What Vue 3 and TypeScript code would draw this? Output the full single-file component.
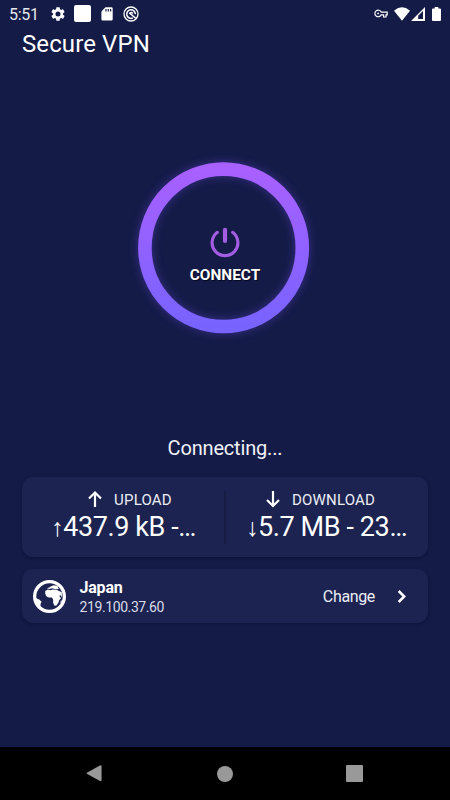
<script setup lang="ts">
import { ref } from 'vue'

interface Traffic {
  label: string
  arrow: string
  value: string
  icon: string
}

const title = 'Secure VPN'
const status = ref('Connecting...')
const server = { name: 'Japan', ip: '219.100.37.60' }
const traffic: Traffic[] = [
  { label: 'UPLOAD', arrow: '↑', value: '437.9 kB -…', icon: 'M7 16V2M1 7.500L7 1.500l6 6' },
  { label: 'DOWNLOAD', arrow: '↓', value: '5.7 MB - 23…', icon: 'M7 0v15M1 9L7 15l6-6' },
]
</script>

<template>
  <div class="screen">
    <header class="statusbar">
      <span class="clock">5:51</span>
      <svg class="gear" viewBox="2 2 20 20"><path fill="#fff" fill-rule="evenodd" d="M19.140 12.940c.04-.3.06-.61.06-.94 0-.32-.02-.64-.07-.94l2.030-1.580c.18-.14.23-.41.12-.61l-1.920-3.320c-.12-.22-.37-.29-.59-.22l-2.390.96c-.5-.38-1.030-.7-1.620-.94L14.400 2.810c-.04-.24-.24-.41-.48-.41h-3.840c-.24 0-.43.17-.47.41l-.36 2.540c-.59.24-1.130.57-1.620.94l-2.390-.96c-.22-.08-.47 0-.59.22L2.740 8.870c-.12.21-.08.47.12.61l2.030 1.580c-.05.3-.09.63-.09.94s.02.64.07.94l-2.030 1.580c-.18.14-.23.41-.12.61l1.920 3.320c.12.22.37.29.59.22l2.390-.96c.5.38 1.030.7 1.620.94l.36 2.540c.05.24.24.41.48.41h3.840c.24 0 .44-.17.47-.41l.36-2.540c.59-.24 1.130-.56 1.620-.94l2.390.96c.22.08.47 0 .59-.22l1.920-3.320c.12-.22.07-.47-.12-.61zM12 15.600A3.600 3.600 0 1 1 12 8.400a3.600 3.600 0 0 1 0 7.200z"/></svg>
      <i class="tile"></i>
      <svg class="sd" viewBox="0 0 12 14"><path fill="#fff" fill-rule="evenodd" d="M4.500.3H10.500Q11.700.3 11.700 1.500V12.300Q11.700 13.600 10.500 13.600H1.600Q.4 13.600.4 12.300V4.500zM4.400 2v2.600h1.200V2zM6.700 2v2.600h1.200V2zM9 2v2.600h1.200V2z"/></svg>
      <svg class="dnd" viewBox="0 0 16 16" fill="none" stroke="#fff"><circle cx="8" cy="8" r="7" stroke-width="1.300"/><path stroke-width="1.500" d="M9.800 12A4.300 4.300 0 1 1 12.300 8.200M6.500 7l6.300 5.400"/><path stroke-width="1.500" d="M6.300 7.700Q8.200 5.200 9.800 7.500"/></svg>
      <span class="grow"></span>
      <svg class="key" viewBox="0 0 14 9" fill="none" stroke="#fff" stroke-width="1.200"><path d="M7.200 3.100H13.200V5.800H12V8H9.600V5.800H7.200A3.300 3.300 0 1 1 7.200 3.100z"/><circle cx="4.100" cy="4.400" r=".9" fill="#fff" stroke="none"/></svg>
      <svg class="wifi" viewBox="0 0 16 14"><path fill="#fff" d="M0 3.700Q8-3 16 3.700L8 13.700z"/></svg>
      <svg class="cell" viewBox="0 0 14 14"><path fill="#fff" fill-rule="evenodd" d="M14 0V14H0zM12 4L7.200 8.800V12H12z"/></svg>
      <svg class="battery" viewBox="0 0 9 14"><path fill="#fff" d="M2.700 0H6.300V1.400H8Q9 1.400 9 2.400V13Q9 14 8 14H1Q0 14 0 13V2.400Q0 1.400 1 1.400H2.700z"/></svg>
    </header>
    <h1>{{ title }}</h1>

    <main>
      <button class="connect" type="button">
        <svg class="ring" viewBox="0 0 172 172">
          <defs>
            <linearGradient id="ringFill" x1="0" y1="0" x2="0" y2="1"><stop offset="0" stop-color="#a860ff"/><stop offset="1" stop-color="#7863ff"/></linearGradient>
          </defs>
          <circle cx="85.600" cy="85.800" r="78.700" fill="none" stroke="url(#ringFill)" stroke-width="13.600"/>
        </svg>
        <span class="face">
          <svg class="power" viewBox="0 0 30 30" fill="none" stroke="#a35de3" stroke-linecap="round"><path stroke-width="3.100" d="M7.400 5.300A12.900 12.900 0 1 0 22.600 5.300"/><path stroke-width="4.200" d="M15 2.800V14"/></svg>
          <span class="connect-label">CONNECT</span>
        </span>
      </button>

      <p class="status">{{ status }}</p>

      <section class="card traffic">
        <div v-for="item in traffic" :key="item.label" class="stat">
          <div class="stat-head">
            <svg viewBox="0 0 14 17" fill="none" stroke="#fff" stroke-width="2.200"><path :d="item.icon"/></svg>
            <span>{{ item.label }}</span>
          </div>
          <div class="stat-value"><span class="dir">{{ item.arrow }}</span>{{ item.value }}</div>
        </div>
      </section>

      <section class="card server">
        <svg class="globe" viewBox="0 0 100 100">
          <circle cx="50" cy="50" r="45" fill="none" stroke="#fff" stroke-width="10"/>
          <path fill="#fff" d="M5 50L11 56L19 59L26 66L23 72L22 86L10 76z"/>
          <path fill="#fff" d="M37 33L45 29L53 31L60 29L73 30L80 34L87 36L88 53L82 45L80 49L85 55L79 61L77 69L71 77L65 78L61 69L61 59L57 53L48 53L40 49L37 41z"/>
          <path fill="#fff" d="M42 25L49 23L55 19L63 16L74 18L78 27L68 28L58 25L50 27z"/>
          <path fill="#fff" d="M84 63L87 61L87 68L83 72z"/>
        </svg>
        <div class="place"><strong>{{ server.name }}</strong><span>{{ server.ip }}</span></div>
        <span class="change">Change</span>
        <svg class="chevron" viewBox="0 0 9 13" fill="none" stroke="#fff" stroke-width="2.500"><path d="M1.700 1L7.200 6.500L1.700 12"/></svg>
      </section>
    </main>

    <nav>
      <svg class="back" viewBox="0 0 16 18"><path fill="#999" d="M.4 8.200L14.300.4Q16 0 16 1.500V16Q16 17.600 14.300 17L.4 9.200Q0 8.700.4 8.200z"/></svg>
      <i class="home"></i>
      <i class="recent"></i>
    </nav>
  </div>
</template>

<style>
body { margin: 0; background: #141b47; }
</style>

<style scoped>
.screen {
  width: 450px;
  height: 800px;
  display: flex;
  flex-direction: column;
  overflow: hidden;
  background: #141b47;
  color: #fff;
  font-family: Roboto, sans-serif;
}
svg { display: block; flex: none; overflow: visible; }
.statusbar { display: flex; align-items: center; height: 27px; padding: 0 9px; flex: none; }
.clock { width: 42px; font-size: 16px; letter-spacing: -.3px; line-height: 27px; color: #e4e6ef; padding-top: 1px; }
.gear { width: 14px; height: 14px; }
.tile { width: 17px; height: 17px; margin-left: 9px; border-radius: 2px; background: #fff; }
.sd { width: 12px; height: 14px; margin-left: 10px; }
.dnd { width: 16px; height: 16px; margin-left: 10px; }
.grow { flex: 1; }
.key { width: 14px; height: 9px; margin-right: 6px; }
.wifi { width: 16px; height: 14px; margin-right: 1px; }
.cell { width: 14px; height: 14px; margin-right: 7px; }
.battery { width: 9px; height: 14px; }
h1 { margin: 2px 0 0 22px; height: 30px; font-size: 24px; line-height: 30px; font-weight: 400; letter-spacing: .1px; flex: none; }
main { flex: 1; display: flex; flex-direction: column; padding: 0 22px; }
.connect {
  display: grid;
  place-items: center;
  width: 172px;
  height: 172px;
  margin: 103px 0 0 116px;
  padding: 0;
  border: 0;
  border-radius: 50%;
  background: transparent;
  color: inherit;
  font: inherit;
}
.ring, .face { grid-area: 1 / 1; }
.ring { width: 172px; height: 172px; filter: drop-shadow(0 0 5px rgba(120, 80, 255, .38)); }
.face { display: flex; flex-direction: column; align-items: center; padding: 14px 0 0 2px; }
.power { width: 30px; height: 30px; }
.connect-label { margin-top: 9px; font-size: 15.400px; line-height: 18px; font-weight: 700; text-shadow: 1px 1px 1px #05081f; }
.status { margin: 101px 0 0; height: 26px; font-size: 20px; letter-spacing: -.17px; line-height: 26px; text-align: center; color: #f0f1f7; }
.card { border-radius: 11px; background: #1c2350; box-shadow: 0 1px 3px rgba(5, 9, 40, .5); }
.traffic { display: grid; grid-template-columns: 1fr 1fr; height: 80px; margin-top: 16px; }
.stat { position: relative; display: flex; flex-direction: column; align-items: center; padding: 12px 0 0; }
.stat + .stat::before { content: ''; position: absolute; left: -1px; top: 14px; width: 2px; height: 53px; background: #161c44; }
.stat-head { display: flex; align-items: center; gap: 12px; height: 20px; padding-left: 13px; font-size: 15px; letter-spacing: .2px; color: #eceef6; }
.stat + .stat .stat-head { padding: 0 12px 0 0; }
.stat-head span { padding-top: 1px; }
.stat-head svg { width: 14px; height: 17px; }
.stat-value { display: flex; align-items: baseline; font-size: 27px; letter-spacing: -.4px; line-height: 37px; white-space: pre; }
.dir { font-family: "Liberation Sans", sans-serif; font-size: 25px; line-height: 20px; }
.server { display: flex; align-items: center; height: 54px; margin-top: 12px; padding: 0 22px 0 11px; }
.globe { width: 33px; height: 33px; }
.place { display: flex; flex-direction: column; margin-left: 13.500px; padding-top: 2px; flex: 1; }
.place strong { font-size: 16px; letter-spacing: -.2px; line-height: 20px; font-weight: 700; }
.place span { font-size: 14px; letter-spacing: -.4px; line-height: 18px; color: #d9dce9; }
.change { font-size: 16px; letter-spacing: -.35px; color: #eceef6; }
.chevron { width: 9px; height: 13px; margin-left: 22px; }
nav { display: flex; align-items: center; height: 53px; background: #000; flex: none; padding-left: 86px; }
.back { width: 16px; height: 17px; }
.home { width: 16px; height: 16px; margin-left: 115px; border-radius: 50%; background: #999; }
.recent { width: 17px; height: 17px; margin-left: 113px; border-radius: 1px; background: #999; }
</style>
